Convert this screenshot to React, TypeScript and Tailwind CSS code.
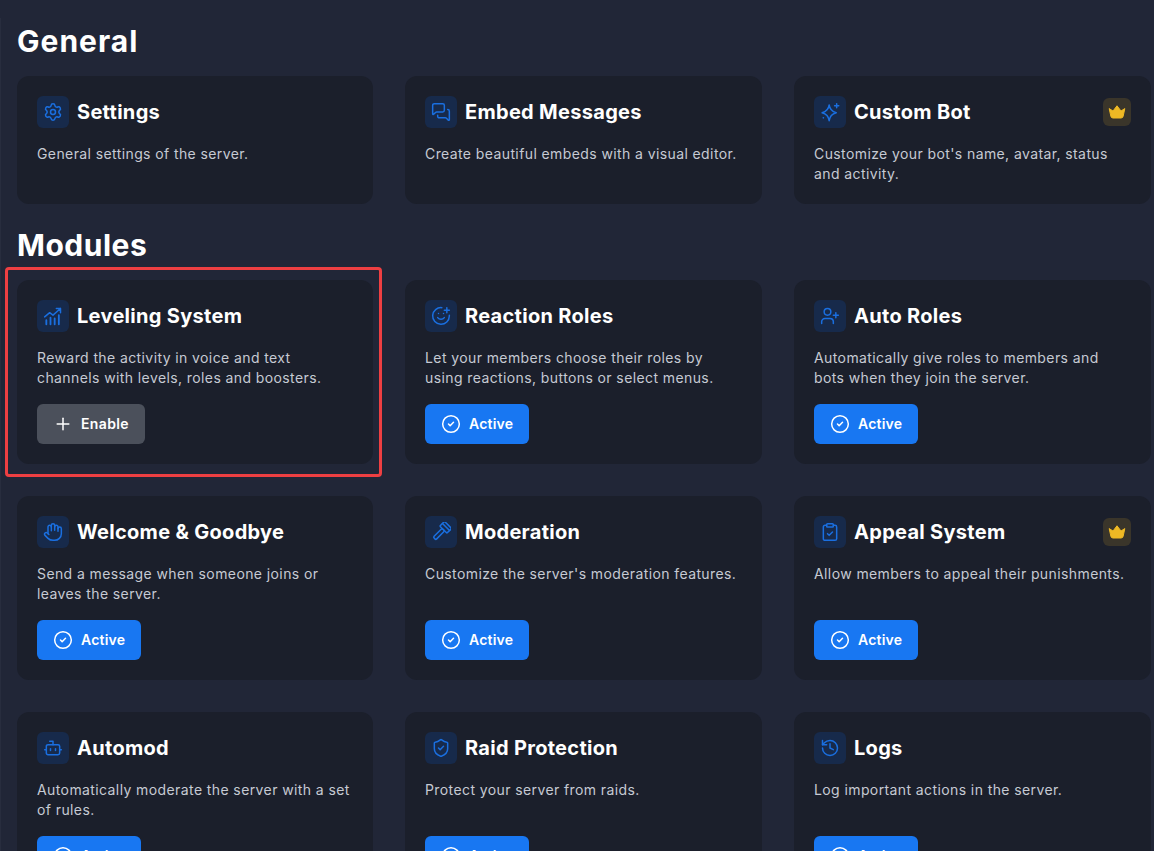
import type { ReactNode } from 'react';
import { Settings, MessagesSquare, SmilePlus, UserPlus, Hand, ClipboardCheck, Bot, ShieldCheck, History, CircleCheck, Plus } from 'lucide-react';

type Module = {
  title: string;
  desc: string;
  icon: ReactNode;
  premium?: boolean;
  status?: 'active' | 'enable';
  highlighted?: boolean;
};

const lucideProps = { size: 20, strokeWidth: 1.8 };

const CrownIcon = () => (
  <svg className="h-[18px] w-[18px]" viewBox="0 0 18 18" fill="currentColor">
    <path d="M1.2 5.6 L5 8 L9 2.8 L13 8 L16.8 5.6 L15.2 13 Q15 15 13 15 L5 15 Q3 15 2.8 13 Z" stroke="currentColor" strokeWidth="1" strokeLinejoin="round" />
  </svg>
);

const SparkIcon = () => (
  <svg width="20" height="20" viewBox="0 0 24 24" fill="none" stroke="currentColor" strokeWidth="1.8" strokeLinecap="round" strokeLinejoin="round">
    <path d="M11 3.5C11.7 9 14 11.5 19.5 13C14 14.5 11.7 17 11 22.5C10.3 17 8 14.5 2.5 13C8 11.5 10.3 9 11 3.5Z" />
    <path d="M20 2v5M17.5 4.5h5" />
    <circle cx="4" cy="19" r="1" fill="currentColor" stroke="none" />
  </svg>
);

const ChartIcon = () => (
  <svg width="20" height="20" viewBox="0 0 24 24" fill="none" stroke="currentColor" strokeWidth="1.8" strokeLinecap="round" strokeLinejoin="round">
    <path d="M2 13l6-5 4 3 9-8M16 3h5v5" />
    <path d="M4 17v5M9 14v8M14 15v7M19 11v11" strokeWidth="2.2" />
  </svg>
);

const GavelIcon = () => (
  <svg width="20" height="20" viewBox="0 0 24 24" fill="none" stroke="currentColor" strokeWidth="1.8" strokeLinecap="round" strokeLinejoin="round">
    <g transform="rotate(45 12 12)">
      <rect x="6" y="0" width="12" height="8" rx="1" />
      <path d="M6 3.5h12" />
      <rect x="9.8" y="8" width="4.4" height="15" rx="1.5" />
    </g>
  </svg>
);

const generalCards: Module[] = [
  { title: 'Settings', desc: 'General settings of the server.', icon: <Settings {...lucideProps} /> },
  { title: 'Embed Messages', desc: 'Create beautiful embeds with a visual editor.', icon: <MessagesSquare {...lucideProps} /> },
  { title: 'Custom Bot', desc: "Customize your bot's name, avatar, status and activity.", icon: <SparkIcon />, premium: true },
];

const moduleCards: Module[] = [
  { title: 'Leveling System', desc: 'Reward the activity in voice and text channels with levels, roles and boosters.', icon: <ChartIcon />, status: 'enable', highlighted: true },
  { title: 'Reaction Roles', desc: 'Let your members choose their roles by using reactions, buttons or select menus.', icon: <SmilePlus {...lucideProps} />, status: 'active' },
  { title: 'Auto Roles', desc: 'Automatically give roles to members and bots when they join the server.', icon: <UserPlus {...lucideProps} />, status: 'active' },
  { title: 'Welcome & Goodbye', desc: 'Send a message when someone joins or leaves the server.', icon: <Hand {...lucideProps} />, status: 'active' },
  { title: 'Moderation', desc: "Customize the server's moderation features.", icon: <GavelIcon />, status: 'active' },
  { title: 'Appeal System', desc: 'Allow members to appeal their punishments.', icon: <ClipboardCheck {...lucideProps} />, premium: true, status: 'active' },
  { title: 'Automod', desc: 'Automatically moderate the server with a set of rules.', icon: <Bot {...lucideProps} />, status: 'active' },
  { title: 'Raid Protection', desc: 'Protect your server from raids.', icon: <ShieldCheck {...lucideProps} />, status: 'active' },
  { title: 'Logs', desc: 'Log important actions in the server.', icon: <History {...lucideProps} />, status: 'active' },
];

const Card = ({ card }: { card: Module }) => (
  <div className="relative rounded-xl bg-[#1b1f2b] p-5">
    {card.highlighted && (
      <div className="pointer-events-none absolute -top-[13px] -bottom-[13px] -left-3 -right-[9px] rounded border-[3px] border-[#ee3f42]" />
    )}
    <div className="flex h-8 items-center">
      <div className="flex h-8 w-8 items-center justify-center rounded-md bg-[#172a4b] text-[#1a6fe0]">
        {card.icon}
      </div>
      <h3 className="ml-2 text-[20px] leading-8 font-bold tracking-[0.3px] text-white">{card.title}</h3>
      {card.premium && (
        <div className="ml-auto flex h-7 w-7 items-center justify-center rounded-md bg-[#3a352a] text-[#efb924]">
          <CrownIcon />
        </div>
      )}
    </div>
    <p className="mt-4 min-h-10 text-sm leading-5 tracking-[0.4px] text-[#c6cad3]">{card.desc}</p>
    {card.status === 'active' && (
      <button className="mt-4 flex h-10 items-center gap-2 rounded-md bg-[#1877f2] px-4 text-sm font-semibold tracking-[0.2px] text-white">
        <CircleCheck size={20} strokeWidth={1.8} />
        Active
      </button>
    )}
    {card.status === 'enable' && (
      <button className="mt-4 flex h-10 items-center gap-2 rounded-md bg-[#4b505b] px-4 text-sm font-semibold tracking-[0.35px] text-white">
        <Plus size={20} strokeWidth={1.8} />
        Enable
      </button>
    )}
  </div>
);

function App() {
  return (
    <div className="h-screen overflow-hidden bg-[#212637] pt-[18px]">
      <div className="h-full border-l border-[#282d3e] pt-[5px] pr-[3px] pl-4 font-['Inter',sans-serif]">
        <h2 className="mb-[17px] text-[30px] leading-9 font-bold tracking-[1px] text-white">General</h2>
        <div className="grid grid-cols-[356px_357px_357px] gap-8">
          {generalCards.map((card) => (
            <Card key={card.title} card={card} />
          ))}
        </div>
        <h2 className="mt-[23px] mb-[17px] text-[30px] leading-9 font-bold tracking-[0.5px] text-white">Modules</h2>
        <div className="grid grid-cols-[356px_357px_357px] gap-8">
          {moduleCards.map((card) => (
            <Card key={card.title} card={card} />
          ))}
        </div>
      </div>
    </div>
  );
}

export default App;
